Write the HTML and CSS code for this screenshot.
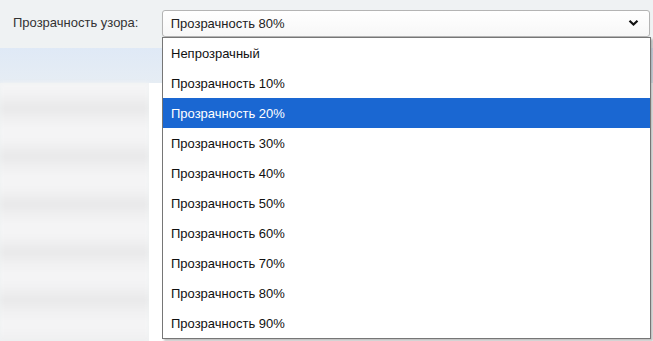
FILE: index.html
```html
<!DOCTYPE html>
<html>
<head>
<meta charset="utf-8">
<link rel="stylesheet" href="styles.css">
</head>
<body>
<div class="page">
  <div class="toprow">
    <span class="label">Прозрачность узора:</span>
    <div class="select">
      <span class="value">Прозрачность 80%</span>
      <svg class="chev" width="11" height="8" viewBox="0 0 11 8"><path d="M1.5 1.8 L5.5 5.6 L9.5 1.8" fill="none" stroke="#111" stroke-width="2.2"/></svg>
    </div>
  </div>
  <div class="band"></div>
  <div class="content">
    <div class="blur"></div>
    <div class="white"></div>
  </div>
  <ul class="list">
    <li>Непрозрачный</li>
    <li>Прозрачность 10%</li>
    <li class="sel">Прозрачность 20%</li>
    <li>Прозрачность 30%</li>
    <li>Прозрачность 40%</li>
    <li>Прозрачность 50%</li>
    <li>Прозрачность 60%</li>
    <li>Прозрачность 70%</li>
    <li>Прозрачность 80%</li>
    <li>Прозрачность 90%</li>
  </ul>
</div>
</body>
</html>
```
FILE: styles.css
```css
html, body {
  margin: 0;
  padding: 0;
  height: 100%;
  overflow: hidden;
}
body {
  font-family: "Liberation Sans", Arial, sans-serif;
  font-size: 13px;
  background: #eff2f3;
}
.page {
  position: relative;
  width: 653px;
  height: 341px;
}
.toprow {
  display: flex;
  align-items: flex-start;
  height: 48px;
  padding: 10px 3px 0 13px;
  box-sizing: border-box;
}
.label {
  color: #333;
  width: 149px;
  line-height: 25px;
}
.select {
  box-sizing: border-box;
  width: 489px;
  height: 27px;
  border: 1px solid #b4b4b4;
  border-radius: 3px;
  background: linear-gradient(#ffffff, #f7f7f7);
  display: flex;
  align-items: center;
  justify-content: space-between;
  padding: 0 10px 0 8px;
  color: #222;
  box-shadow: 0 1px 1px rgba(0,0,0,0.08);
}
.value { margin-top: -1px; }
.chev { margin-top: -1px; }
.band {
  height: 35px;
  background: linear-gradient(#dfe9f6, #e6edf4);
}
.content {
  display: flex;
  height: 258px;
}
.blur {
  width: 149px;
  background:
    repeating-linear-gradient(180deg,
      #f5f5f6 0px, #f3f3f4 10px, #e9e9ea 25px, #f1f1f2 38px, #f5f5f6 48px);
  filter: blur(2px);
}
.white {
  flex: 1;
  background: #fff;
  position: relative;
  z-index: 1;
}
.list {
  position: absolute;
  z-index: 2;
  left: 162px;
  top: 37px;
  width: 489px;
  margin: 0;
  padding: 0;
  list-style: none;
  box-sizing: border-box;
  border: 1px solid #767676;
  background: #fff;
  box-shadow: 2px 2px 2px rgba(0,0,0,0.25);
}
.list li {
  height: 30px;
  line-height: 31px;
  padding-left: 8px;
  color: #111;
  overflow: hidden;
}
.list li.sel {
  background: #1a67d2;
  color: #fff;
}
```
